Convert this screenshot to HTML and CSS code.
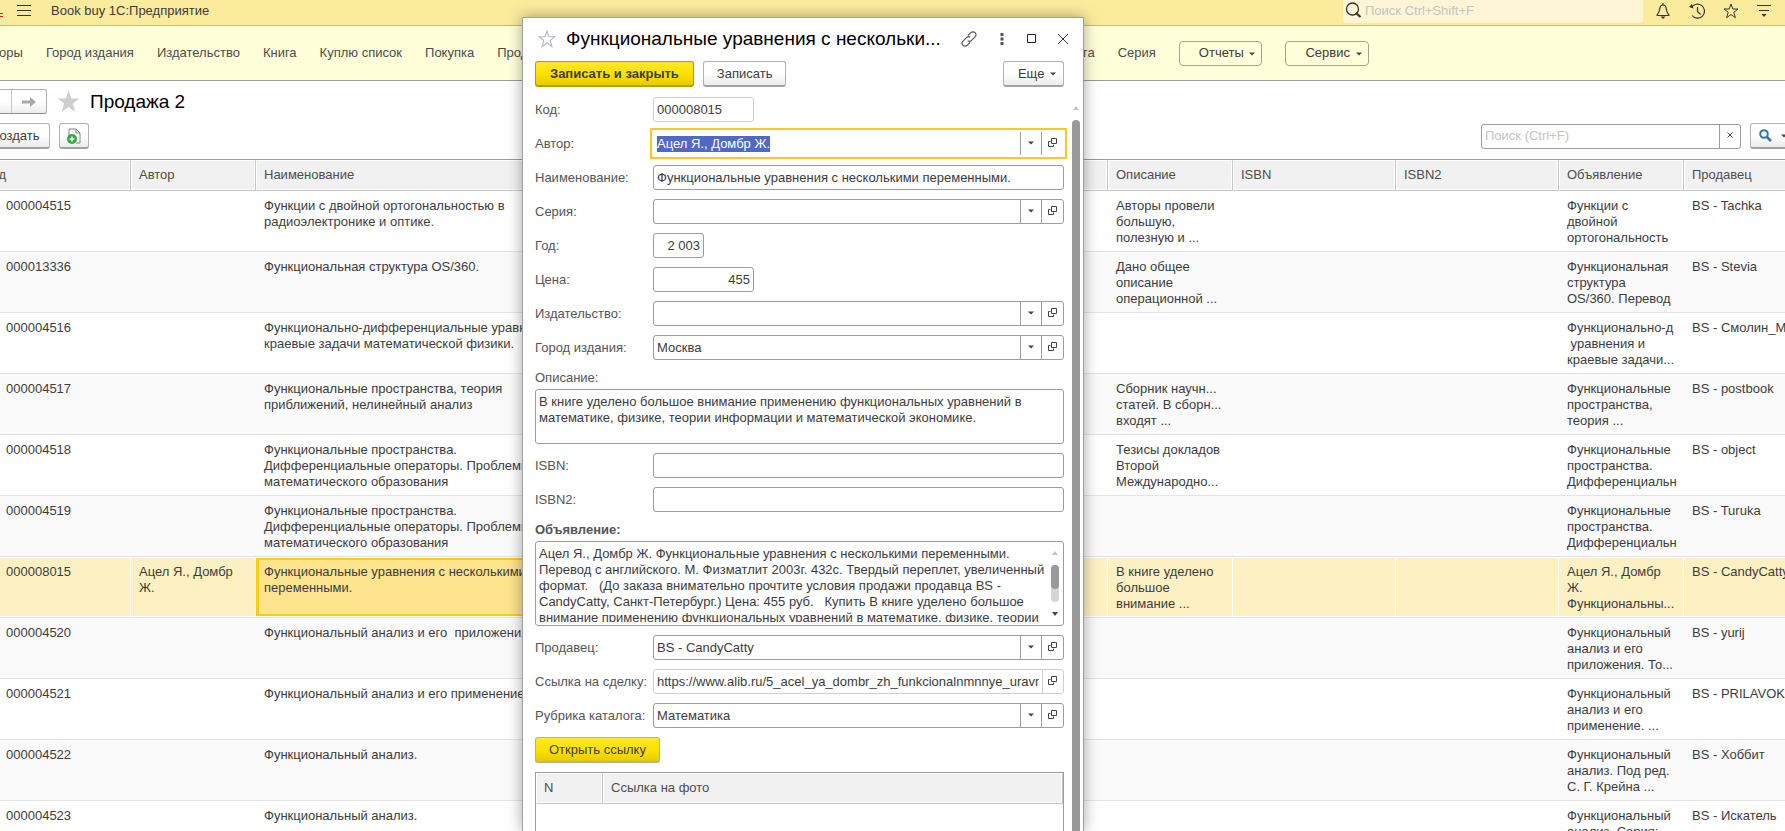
FILE: index.html
```
<!DOCTYPE html>
<html lang="ru">
<head>
  <meta charset="UTF-8" />
  <meta name="viewport" content="width=device-width, initial-scale=1.0" />
  <title>Book buy 1С:Предприятие</title>
  <link rel="stylesheet" href="styles.css">
</head>
<body>
  <svg class="defs" aria-hidden="true">
    <symbol id="i-open" viewBox="0 0 10 10">
      <path d="M3.500 .5h5v5h-5zM2.500 3.500h-2v5h5v-2" fill="none" stroke="#444" />
    </symbol>
    <symbol id="i-caret" viewBox="0 0 6 4">
      <path d="M0 .5h6L3 3.500z" fill="#444" />
    </symbol>
    <symbol id="i-star" viewBox="0 0 16 16">
      <path d="M8 1l1.800 5h5.200l-4.200 3.300 1.600 5.400L8 11.500l-4.400 3.200 1.600-5.400L1 6h5.200z" />
    </symbol>
  </svg>

  <div class="app">
    <header class="topbar">
      <span class="logo"></span>
      <button class="icon-btn" aria-label="Меню">
        <svg width="14" height="12"><path d="M0 .5h14M0 5.500h14M0 10.500h14" stroke="#333" /></svg>
      </button>
      <span class="app-name">Book buy 1С:Предприятие</span>
      <div class="global-search">
        <svg width="17" height="17" viewBox="0 0 17 17"><circle cx="7.500" cy="7" r="6" fill="none" stroke="#333" stroke-width="1.300" /><path d="M11 11l4.500 4" stroke="#333" stroke-width="2.200" /></svg>
        <input type="text" placeholder="Поиск Ctrl+Shift+F" aria-label="Поиск" />
      </div>
      <div class="top-icons">
        <button class="icon-btn" aria-label="Уведомления">
          <svg width="16" height="16" viewBox="0 0 16 16"><path d="M1.500 12.500h13M2 12c2-2 2.500-3 2.700-6C4.900 3.500 6 2 8 2s3.100 1.500 3.300 4c.2 3 .7 4 2.700 6M8 0v2" fill="none" stroke="#333" stroke-width="1.200" /><path d="M5.500 13.500h5L8 16z" fill="#333" /></svg>
        </button>
        <button class="icon-btn" aria-label="История">
          <svg width="16" height="16" viewBox="0 0 16 16"><path d="M2.500 4.500A7 7 0 1 1 3 12.500M8.500 4v4.500l3 3" fill="none" stroke="#333" stroke-width="1.200" /><path d="M0 4l3-3 1.500 4.500z" fill="#333" /></svg>
        </button>
        <button class="icon-btn" aria-label="Избранное">
          <svg class="star-line" width="16" height="16"><use href="#i-star" /></svg>
        </button>
        <button class="icon-btn" aria-label="Настройки">
          <svg width="14" height="14" viewBox="0 0 14 14"><path d="M0 1.500h14M2 6.500h10" stroke="#333" /><path d="M4.500 10h5L7 13z" fill="#333" /></svg>
        </button>
      </div>
    </header>

    <nav class="menu">
      <div class="menu-main">
        <a href="#">Авторы</a>
        <a href="#">Город издания</a>
        <a href="#">Издательство</a>
        <a href="#">Книга</a>
        <a href="#">Куплю список</a>
        <a href="#">Покупка</a>
        <a href="#">Продажа</a>
      </div>
      <div class="menu-extra">
        <a href="#">Рубрика каталога</a>
        <a href="#">Серия</a>
        <button class="menu-btn">Отчеты <svg width="6" height="4"><use href="#i-caret" /></svg></button>
        <button class="menu-btn">Сервис <svg width="6" height="4"><use href="#i-caret" /></svg></button>
      </div>
    </nav>

    <main class="page">
      <div class="page-head">
        <div class="history">
          <button aria-label="Назад"><svg width="14" height="12" viewBox="0 0 14 12"><path d="M14 4.500H6V1L0 6l6 5V7.500h8z" fill="#a8a8a8" /></svg></button>
          <button aria-label="Вперед"><svg width="14" height="12" viewBox="0 0 14 12"><path d="M0 4.500h8V1l6 5-6 5V7.500H0z" fill="#a8a8a8" /></svg></button>
        </div>
        <svg class="page-star" width="25" height="25" viewBox="0 0 16 16"><use href="#i-star" /></svg>
        <h1>Продажа 2</h1>
      </div>

      <div class="toolbar">
        <button class="btn create">Создать</button>
        <button class="btn btn-icon" aria-label="Создать копированием">
          <svg width="14" height="16" viewBox="0 0 14 16"><path d="M2 8V1h7l4 4v10H9" fill="#fff" stroke="#75879a" /><path d="M9 1v4h4" fill="none" stroke="#75879a" /><circle cx="5" cy="11" r="5" fill="#2fa83c" /><path d="M2.500 11h5M5 8.500v5" stroke="#fff" stroke-width="1.500" /></svg>
        </button>
        <div class="list-search">
          <input type="text" placeholder="Поиск (Ctrl+F)" aria-label="Поиск в списке" />
          <button aria-label="Очистить"><svg width="6" height="6"><path d="M.5 .5l5 5M5.500 .5l-5 5" stroke="#444" /></svg></button>
        </div>
        <button class="btn find" aria-label="Найти">
          <svg width="13" height="13" viewBox="0 0 13 13"><circle cx="5" cy="5" r="3.800" fill="none" stroke="#2c78ae" stroke-width="2" /><path d="M8 8l4 4" stroke="#2c78ae" stroke-width="2.500" /></svg>
          <svg width="6" height="4"><use href="#i-caret" /></svg>
        </button>
      </div>

      <table class="list">
        <colgroup>
          <col class="c-code"><col class="c-author"><col class="c-name"><col>
          <col class="c-descr"><col class="c-isbn"><col class="c-isbn"><col class="c-descr"><col class="c-seller">
        </colgroup>
        <thead>
          <tr><th>Код</th><th>Автор</th><th>Наименование</th><th></th><th>Описание</th><th>ISBN</th><th>ISBN2</th><th>Объявление</th><th>Продавец</th></tr>
        </thead>
        <tbody>
          <tr><td>000004515</td><td></td><td>Функции с двойной ортогональностью в<br>радиоэлектронике и оптике.</td><td></td><td>Авторы провели<br>большую,<br>полезную и ...</td><td></td><td></td><td>Функции с<br>двойной<br>ортогональность</td><td>BS - Tachka</td></tr>
          <tr><td>000013336</td><td></td><td>Функциональная структура OS/360.</td><td></td><td>Дано общее<br>описание<br>операционной ...</td><td></td><td></td><td>Функциональная<br>структура<br>OS/360. Перевод</td><td>BS - Stevia</td></tr>
          <tr><td>000004516</td><td></td><td>Функционально-дифференциальные уравнения и<br>краевые задачи математической физики.</td><td></td><td></td><td></td><td></td><td>Функционально-д<br>&nbsp;уравнения и<br>краевые задачи...</td><td>BS - Смолин_М</td></tr>
          <tr><td>000004517</td><td></td><td>Функциональные пространства, теория<br>приближений, нелинейный анализ</td><td></td><td>Сборник научн...<br>статей. В сборн...<br>входят ...</td><td></td><td></td><td>Функциональные<br>пространства,<br>теория ...</td><td>BS - postbook</td></tr>
          <tr><td>000004518</td><td></td><td>Функциональные пространства.<br>Дифференциальные операторы. Проблемы<br>математического образования</td><td></td><td>Тезисы докладов<br>Второй<br>Международно...</td><td></td><td></td><td>Функциональные<br>пространства.<br>Дифференциальн</td><td>BS - object</td></tr>
          <tr><td>000004519</td><td></td><td>Функциональные пространства.<br>Дифференциальные операторы. Проблемы<br>математического образования</td><td></td><td></td><td></td><td></td><td>Функциональные<br>пространства.<br>Дифференциальн</td><td>BS - Turuka</td></tr>
          <tr class="selected"><td>000008015</td><td>Ацел Я., Домбр<br>Ж.</td><td class="current">Функциональные уравнения с несколькими<br>переменными.</td><td></td><td>В книге уделено<br>большое<br>внимание ...</td><td></td><td></td><td>Ацел Я., Домбр<br>Ж.<br>Функциональны...</td><td>BS - CandyCatty</td></tr>
          <tr><td>000004520</td><td></td><td>Функциональный анализ и его&nbsp; приложения</td><td></td><td></td><td></td><td></td><td>Функциональный<br>анализ и его<br>приложения. То...</td><td>BS - yurij</td></tr>
          <tr><td>000004521</td><td></td><td>Функциональный анализ и его применение</td><td></td><td></td><td></td><td></td><td>Функциональный<br>анализ и его<br>применение. ...</td><td>BS - PRILAVOK</td></tr>
          <tr><td>000004522</td><td></td><td>Функциональный анализ.</td><td></td><td></td><td></td><td></td><td>Функциональный<br>анализ. Под ред.<br>С. Г. Крейна ...</td><td>BS - Хоббит</td></tr>
          <tr><td>000004523</td><td></td><td>Функциональный анализ.</td><td></td><td></td><td></td><td></td><td>Функциональный<br>анализ. Серия:</td><td>BS - Искатель</td></tr>
        </tbody>
      </table>
    </main>
  </div>

  <section class="dialog" role="dialog" aria-labelledby="dialogTitle">
    <div class="dialog-title">
      <svg class="dialog-star" width="18" height="18" viewBox="0 0 16 16"><use href="#i-star" /></svg>
      <h2 id="dialogTitle">Функциональные уравнения с нескольки...</h2>
      <div class="window-btns">
        <button class="icon-btn" aria-label="Ссылка"><svg width="16" height="16" viewBox="0 0 16 16"><path d="M7 4.500l2.800-2.800a2.900 2.900 0 0 1 4.200 0a3 3 0 0 1 0 4.200L10.500 9.400a2.900 2.900 0 0 1-3.800 .3M9 11.500l-2.800 2.800a2.900 2.900 0 0 1-4.200 0a3 3 0 0 1 0-4.200L5.500 6.600a2.900 2.900 0 0 1 3.800-.3" fill="none" stroke="#555" stroke-width="1.200" /></svg></button>
        <button class="icon-btn" aria-label="Дополнительно"><svg width="8" height="12"><path d="M2.500 0h3v3h-3zM2.500 4.500h3v3h-3zM2.500 9h3v3h-3z" fill="#555" /></svg></button>
        <button class="icon-btn" aria-label="Развернуть"><svg width="10" height="10"><path d="M.5 .5h8v8h-8z" fill="none" stroke="#222" /></svg></button>
        <button class="icon-btn" aria-label="Закрыть"><svg width="10" height="10"><path d="M0 0l10 10M10 0L0 10" stroke="#333" /></svg></button>
      </div>
    </div>

    <div class="dialog-cmds">
      <button class="btn primary">Записать и закрыть</button>
      <button class="btn">Записать</button>
      <button class="btn more">Еще <svg width="6" height="4"><use href="#i-caret" /></svg></button>
    </div>

    <div class="dialog-body">
      <form class="form">
        <div class="row">
          <label for="code">Код:</label>
          <div class="field medium light"><input id="code" type="text" value="000008015" readonly /></div>
        </div>
        <div class="row">
          <label for="author">Автор:</label>
          <div class="field focused">
            <input id="author" type="text" value="Ацел Я., Домбр Ж." />
            <button type="button" aria-label="Выбрать"><svg width="6" height="4"><use href="#i-caret" /></svg></button>
            <button type="button" aria-label="Открыть"><svg width="10" height="10"><use href="#i-open" /></svg></button>
          </div>
        </div>
        <div class="row">
          <label for="name">Наименование:</label>
          <div class="field"><input id="name" type="text" value="Функциональные уравнения с несколькими переменными." /></div>
        </div>
        <div class="row">
          <label for="series">Серия:</label>
          <div class="field">
            <input id="series" type="text" />
            <button type="button" aria-label="Выбрать"><svg width="6" height="4"><use href="#i-caret" /></svg></button>
            <button type="button" aria-label="Открыть"><svg width="10" height="10"><use href="#i-open" /></svg></button>
          </div>
        </div>
        <div class="row">
          <label for="year">Год:</label>
          <div class="field small number"><input id="year" type="text" value="2 003" /></div>
        </div>
        <div class="row">
          <label for="price">Цена:</label>
          <div class="field medium number"><input id="price" type="text" value="455" /></div>
        </div>
        <div class="row">
          <label for="publisher">Издательство:</label>
          <div class="field">
            <input id="publisher" type="text" />
            <button type="button" aria-label="Выбрать"><svg width="6" height="4"><use href="#i-caret" /></svg></button>
            <button type="button" aria-label="Открыть"><svg width="10" height="10"><use href="#i-open" /></svg></button>
          </div>
        </div>
        <div class="row">
          <label for="city">Город издания:</label>
          <div class="field">
            <input id="city" type="text" value="Москва" />
            <button type="button" aria-label="Выбрать"><svg width="6" height="4"><use href="#i-caret" /></svg></button>
            <button type="button" aria-label="Открыть"><svg width="10" height="10"><use href="#i-open" /></svg></button>
          </div>
        </div>
        <div class="block">
          <label for="descr">Описание:</label>
          <div class="field area"><textarea id="descr" rows="3">В книге уделено большое внимание применению функциональных уравнений в
математике, физике, теории информации и математической экономике.</textarea></div>
        </div>
        <div class="row">
          <label for="isbn">ISBN:</label>
          <div class="field"><input id="isbn" type="text" /></div>
        </div>
        <div class="row">
          <label for="isbn2">ISBN2:</label>
          <div class="field"><input id="isbn2" type="text" /></div>
        </div>
        <div class="block">
          <label class="bold" for="advert">Объявление:</label>
          <div class="field area tall">
            <textarea id="advert" rows="5">Ацел Я., Домбр Ж. Функциональные уравнения с несколькими переменными.
Перевод с английского. М. Физматлит 2003г. 432с. Твердый переплет, увеличенный
формат. &nbsp; (До заказа внимательно прочтите условия продажи продавца BS -
CandyCatty, Санкт-Петербург.) Цена: 455 руб. &nbsp; Купить В книге уделено большое
внимание применению функциональных уравнений в математике, физике, теории</textarea>
            <div class="area-scroll">
              <span class="arrow-up"></span>
              <span class="area-track"><span class="area-thumb"></span></span>
              <span class="arrow-down"></span>
            </div>
          </div>
        </div>
        <div class="row">
          <label for="seller">Продавец:</label>
          <div class="field">
            <input id="seller" type="text" value="BS - CandyCatty" />
            <button type="button" aria-label="Выбрать"><svg width="6" height="4"><use href="#i-caret" /></svg></button>
            <button type="button" aria-label="Открыть"><svg width="10" height="10"><use href="#i-open" /></svg></button>
          </div>
        </div>
        <div class="row">
          <label for="link">Ссылка на сделку:</label>
          <div class="field light">
            <input id="link" type="text" value="https://www.alib.ru/5_acel_ya_dombr_zh_funkcionalnmnnye_uravn" readonly />
            <button type="button" aria-label="Открыть"><svg width="10" height="10"><use href="#i-open" /></svg></button>
          </div>
        </div>
        <div class="row">
          <label for="rubric">Рубрика каталога:</label>
          <div class="field">
            <input id="rubric" type="text" value="Математика" />
            <button type="button" aria-label="Выбрать"><svg width="6" height="4"><use href="#i-caret" /></svg></button>
            <button type="button" aria-label="Открыть"><svg width="10" height="10"><use href="#i-open" /></svg></button>
          </div>
        </div>
        <button type="button" class="btn primary plain">Открыть ссылку</button>
        <div class="photos">
          <table>
            <thead><tr><th class="c-num">N</th><th>Ссылка на фото</th></tr></thead>
          </table>
        </div>
      </form>
      <div class="dialog-scroll">
        <span class="arrow-up"></span>
        <span class="dialog-thumb"></span>
      </div>
    </div>
  </section>

  <script>
    document.getElementById("author").select();
  </script>
</body>
</html>
```
FILE: styles.css
```
* {
  box-sizing: border-box;
}

body {
  margin: 0;
  height: 100vh;
  overflow: hidden;
  position: relative;
  font-family: "Liberation Sans", Arial, sans-serif;
  font-size: 13px;
  line-height: 16px;
  color: #3c3c3c;
  background: #fff;
}

button,
input,
textarea {
  font: inherit;
  color: inherit;
}

button {
  cursor: pointer;
}

.defs {
  display: none;
}

/* the workspace is scrolled a little to the right */
.app {
  margin-left: -24px;
}

.icon-btn {
  display: flex;
  align-items: center;
  justify-content: center;
  border: none;
  background: none;
  padding: 0;
}

/* top bar */
.topbar {
  display: flex;
  align-items: flex-start;
  height: 26px;
  padding-right: 14px;
  background: #faeb9d;
  border-bottom: 1px solid #c5bb78;
}

.topbar > .icon-btn {
  margin: 5px 20px 0 14px;
}

.logo {
  width: 27px;
  height: 17px;
  border-bottom: 4px double #d8232a;
}

.app-name {
  padding-top: 3px;
}

.global-search {
  display: flex;
  align-items: center;
  gap: 3px;
  width: 300px;
  height: 23px;
  padding: 0 2px 2px;
  margin-left: auto;
  background: #fdf5d6;
  border-radius: 0 0 3px 3px;
}

.global-search input {
  flex: 1;
  min-width: 0;
  border: none;
  padding: 0;
  background: none;
  outline: none;
}

input::placeholder {
  color: #c4c4c4;
}

.top-icons {
  display: flex;
  gap: 18px;
  padding: 3px 0 0 12px;
}

.star-line {
  fill: none;
  stroke: #333;
}

/* sections menu */
.menu {
  display: flex;
  align-items: center;
  height: 55px;
  padding-left: 2px;
  background: #ffffda;
  border-bottom: 1px solid #9c9c9c;
}

.menu a {
  color: #4c4c4c;
  text-decoration: none;
  white-space: nowrap;
}

.menu-main,
.menu-extra {
  display: flex;
  align-items: center;
  gap: 23px;
}

.menu-extra {
  margin-left: auto;
  width: 797px;
}

.menu-btn {
  height: 25px;
  padding: 0 6px 0 19px;
  border: 1px solid #a5a58c;
  border-radius: 4px;
  background: none;
}

.menu-btn svg,
.more svg {
  margin-left: 2px;
  vertical-align: middle;
}

/* list page */
.page-head {
  display: flex;
  align-items: center;
  height: 41px;
}

.history {
  display: flex;
  border: 1px solid #b0b0b0;
  border-bottom-color: #8f8f8f;
  border-radius: 3px;
  background: linear-gradient(#fff 50%, #ececec);
}

.history button {
  display: flex;
  align-items: center;
  justify-content: center;
  width: 35px;
  height: 23px;
  padding: 0;
  border: none;
  background: none;
}

.history button:first-child {
  justify-content: flex-start;
  padding-left: 8px;
  width: 34px;
}

.history button + button {
  border-left: 1px solid #c8c8c8;
}

.page-star {
  margin: 0 9px;
  fill: #cdcfd1;
}

h1,
h2 {
  margin: 0;
  font-size: 19px;
  font-weight: normal;
  line-height: 24px;
  white-space: nowrap;
  color: #000;
}

.toolbar {
  display: flex;
  align-items: center;
  gap: 9px;
  height: 37px;
  padding-bottom: 9px;
}

.btn {
  height: 26px;
  padding: 0 13px;
  border: 1px solid #b2b2b2;
  border-bottom: 2px solid #a2a2a2;
  border-radius: 3px;
  background: linear-gradient(#fff 50%, #ebebeb);
  white-space: nowrap;
}

.create {
  width: 74px;
}

.btn-icon {
  display: flex;
  align-items: center;
  padding: 0 7px;
}

.list-search {
  display: flex;
  width: 260px;
  height: 25px;
  margin-left: auto;
  border: 1px solid #9c9c9c;
  border-radius: 3px;
}

.list-search input {
  flex: 1;
  min-width: 0;
  padding: 0 3px;
  border: none;
  background: none;
  outline: none;
}

.list-search button {
  width: 21px;
  padding: 0 0 3px;
  border: none;
  border-left: 1px solid #9c9c9c;
  background: none;
}

.list-search button svg {
  vertical-align: middle;
}

.find {
  display: flex;
  align-items: center;
  gap: 9px;
  width: 48px;
  padding: 0 8px;
  margin-right: -13px;
}

.find svg {
  flex: none;
}

/* list */
.list {
  width: calc(100% + 24px);
  table-layout: fixed;
  border-collapse: separate;
  border-spacing: 0;
  border-top: 1px solid #9c9c9c;
}

.c-code {
  width: 155px;
}

.c-author,
.c-descr {
  width: 125px;
}

.c-name {
  width: 330px;
}

.c-isbn {
  width: 163px;
}

.c-seller {
  width: 125px;
}

th {
  font-weight: normal;
  text-align: left;
  white-space: nowrap;
  color: #4d4d4d;
  background: #f1f1f1;
  border: 1px solid #fff;
  border-right-color: #c6c6c6;
  border-bottom-color: #c6c6c6;
  box-shadow: inset -1px -1px #fff;
}

.list th {
  height: 31px;
  padding: 0 7px 1px;
}

.list td {
  height: 61px;
  padding: 7px 0 5px 8px;
  vertical-align: top;
  white-space: nowrap;
  border-bottom: 1px solid #e3e3e3;
}

.list td:first-child {
  padding-left: 30px;
}

.list tbody tr:nth-child(even) td {
  background: #fafafa;
}

.list tbody tr.selected td {
  background: #fdf1c4;
  border-right: 1px solid #fff;
  box-shadow: inset 0 1px #fff, inset 0 -1px #fff;
}

.list tbody tr.selected td.current {
  background: #fee48f;
  box-shadow: inset 0 1px #fff, inset 0 -1px #fff, inset 0 0 0 3px #fcc91e;
}

/* record window */
.dialog {
  position: absolute;
  top: 17px;
  bottom: 0;
  left: 522px;
  width: 562px;
  display: flex;
  flex-direction: column;
  overflow: hidden;
  background: #fff;
  border: 1px solid #a0a0a0;
  border-bottom: none;
  box-shadow: 0 0 14px rgba(0, 0, 0, 0.35);
}

.dialog-title {
  display: flex;
  align-items: center;
  height: 43px;
  padding: 0 15px 2px;
}

.dialog-star {
  margin-right: 10px;
  fill: none;
  stroke: #b4bac2;
}

.window-btns {
  display: flex;
  gap: 21px;
  margin-left: auto;
}

.dialog-cmds {
  display: flex;
  gap: 9px;
  padding: 0 19px 0 12px;
}

.more {
  margin-left: auto;
  padding: 0 7px 0 14px;
}

.primary {
  padding: 0 14px;
  font-weight: bold;
  border-color: #b59f00;
  background: linear-gradient(#ffe82e, #ffe100 50%, #e8cb00);
}

.plain {
  align-self: flex-start;
  padding: 0 13px;
  font-weight: normal;
  border-color: #b2b2a0;
}

.dialog-body {
  display: flex;
  flex: 1;
  min-height: 0;
  padding: 10px 3px 0 12px;
}

.form {
  display: flex;
  flex: 1;
  flex-direction: column;
  gap: 9px;
}

.row {
  display: flex;
  align-items: center;
  height: 25px;
  flex: none;
}

.row label {
  width: 118px;
  white-space: nowrap;
}

label {
  color: #555;
}

.bold {
  font-weight: bold;
}

.block label {
  display: block;
  height: 20px;
  line-height: 18px;
}

.field {
  display: flex;
  flex: 1;
  height: 25px;
  border: 1px solid #9c9c9c;
  border-radius: 3px;
  background: #fff;
}

.field.small {
  flex: none;
  width: 51px;
}

.field.medium {
  flex: none;
  width: 101px;
}

.field.light {
  border-color: #d0d0d0;
}

.number input {
  text-align: right;
}

.field input {
  flex: 1;
  min-width: 0;
  padding: 0 3px;
  border: none;
  background: none;
  outline: none;
}

.field button {
  display: flex;
  align-items: center;
  justify-content: center;
  width: 21px;
  padding: 0 0 2px;
  border: none;
  border-left: 1px solid #9c9c9c;
  background: none;
}

.field button + button {
  width: 22px;
}

.field.light button {
  border-left-color: #d0d0d0;
}

.field.focused {
  border-color: transparent;
  border-radius: 0;
  outline: 2px solid #fcc91e;
  outline-offset: 1px;
}

.field input::selection {
  color: #fff;
  background: #5168c4;
}

.field.area {
  height: 55px;
}

.field.tall {
  height: 85px;
}

.area textarea {
  flex: 1;
  min-width: 0;
  margin: 3px 0;
  padding: 1px 3px 0;
  border: none;
  outline: none;
  resize: none;
  overflow: hidden;
  white-space: pre;
}

.area-scroll {
  display: flex;
  flex-direction: column;
  align-items: center;
  justify-content: space-between;
  width: 14px;
  padding: 9px 2px 9px 0;
}

.arrow-up,
.arrow-down {
  border: 3px solid transparent;
}

.arrow-up {
  border-top: none;
  border-bottom: 4px solid #c4c4c4;
}

.arrow-down {
  border-bottom: none;
  border-top: 4px solid #444;
}

.area-track {
  width: 8px;
  height: 37px;
  border-radius: 4px;
  background: #d6d6d6;
}

.area-thumb {
  display: block;
  height: 24px;
  border-radius: 4px;
  background: #999;
}

.photos {
  flex: 1;
  border: 1px solid #9c9c9c;
  border-bottom: none;
}

.photos table {
  width: 100%;
  border-spacing: 0;
}

.photos th {
  height: 31px;
  padding: 0 7px 2px;
}

.photos .c-num {
  width: 67px;
}

.dialog-scroll {
  display: flex;
  flex-direction: column;
  align-items: center;
  width: 8px;
  margin-left: 8px;
  padding-top: 9px;
}

.dialog-thumb {
  flex: 1;
  width: 8px;
  margin-top: 10px;
  border-radius: 4px 4px 0 0;
  background: #999;
}
```
